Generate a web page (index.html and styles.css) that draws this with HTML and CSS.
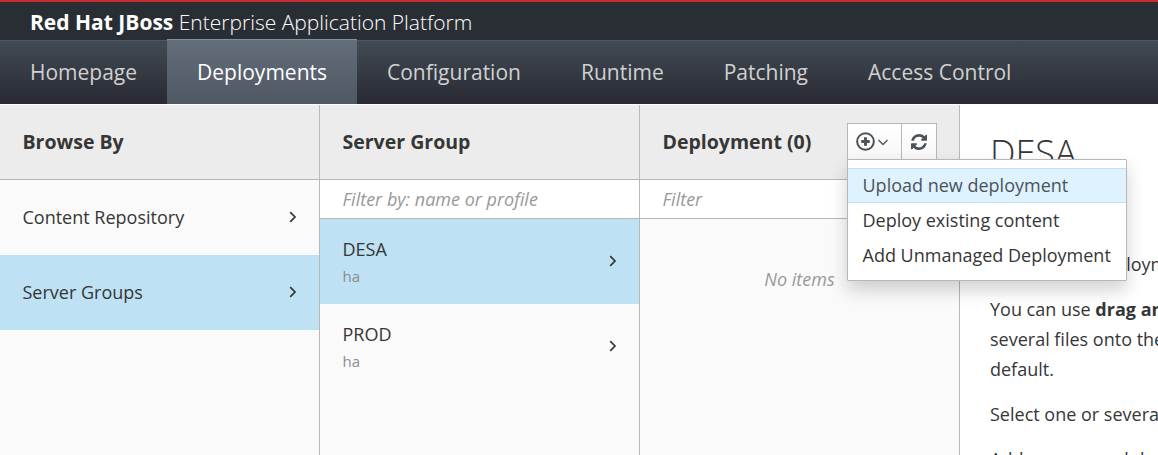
FILE: index.html
```html
<!DOCTYPE html>
<html lang="en">
<head>
<meta charset="utf-8">
<title>Red Hat JBoss Enterprise Application Platform</title>
<link rel="stylesheet" href="styles.css">
</head>
<body>
<header class="brand"><strong>Red Hat JBoss</strong>&nbsp;<span>Enterprise Application Platform</span></header>
<nav class="nav">
  <a class="nav-item">Homepage</a>
  <a class="nav-item active">Deployments</a>
  <a class="nav-item">Configuration</a>
  <a class="nav-item">Runtime</a>
  <a class="nav-item">Patching</a>
  <a class="nav-item">Access Control</a>
</nav>
<main class="finder">
  <section class="column">
    <div class="column-head"><h2>Browse By</h2></div>
    <div class="row"><span>Content Repository</span><svg class="chev" viewBox="0 0 8 12"><path d="M1.2 1.2 6 6 1.2 10.8"/></svg></div>
    <div class="row selected"><span>Server Groups</span><svg class="chev" viewBox="0 0 8 12"><path d="M1.2 1.2 6 6 1.2 10.8"/></svg></div>
  </section>
  <section class="column">
    <div class="column-head"><h2>Server Group</h2></div>
    <div class="filter">Filter by: name or profile</div>
    <div class="row tall selected"><div>DESA<small>ha</small></div><svg class="chev" viewBox="0 0 8 12"><path d="M1.2 1.2 6 6 1.2 10.8"/></svg></div>
    <div class="row tall"><div>PROD<small>ha</small></div><svg class="chev" viewBox="0 0 8 12"><path d="M1.2 1.2 6 6 1.2 10.8"/></svg></div>
  </section>
  <section class="column">
    <div class="column-head">
      <h2>Deployment (0)</h2>
      <div class="actions">
        <div class="btn add">
          <svg class="plus" viewBox="0 0 18 18"><circle cx="9" cy="9" r="7.9" fill="none" stroke="#4d5258" stroke-width="1.9"/><path d="M9 5v8M5 9h8" fill="none" stroke="#4d5258" stroke-width="2.8"/></svg>
          <svg class="down" viewBox="0 0 10 7"><path d="M.5 1 5 5.500 9.500 1" fill="none" stroke="#4d5258" stroke-width="1.3"/></svg>
        </div>
        <div class="btn refresh"><svg viewBox="0 0 1536 1536"><path fill="#4d5258" d="M1511 928q0 5-1 7-64 268-268 434.500T764 1536q-146 0-282.500-55T238 1324l-129 129q-19 19-45 19t-45-19-19-45V960q0-26 19-45t45-19h448q26 0 45 19t19 45-19 45l-137 137q71 66 161 102t187 36q134 0 250-65t186-179q11-17 53-117 8-23 30-23h192q13 0 22.500 9.500t9.500 22.500zm25-800v448q0 26-19 45t-45 19h-448q-26 0-45-19t-19-45 19-45l138-138Q969 256 768 256q-134 0-250 65T332 500q-11 17-53 117-8 23-30 23H50q-13 0-22.500-9.500T18 608v-7q65-268 270-434.500T768 0q146 0 284 55.500T1297 212l130-129q19-19 45-19t45 19 19 45z"/></svg></div>
        <div class="menu">
          <a class="menu-item hover">Upload new deployment</a>
          <a class="menu-item">Deploy existing content</a>
          <a class="menu-item">Add Unmanaged Deployment</a>
        </div>
      </div>
    </div>
    <div class="filter">Filter</div>
    <div class="empty">No items</div>
  </section>
  <article class="preview">
    <h1>DESA</h1>
    <p>Manage the deployments</p>
    <p>You can use <b>drag and</b><br>several files onto the<br>default.</p>
    <p>Select one or several</p>
    <p>Add unmanaged deployments</p>
  </article>
</main>
</body>
</html>
```
FILE: styles.css
```css
* { box-sizing: border-box; }
body {
  margin: 0;
  height: 455px;
  overflow: hidden;
  display: flex;
  flex-direction: column;
  font: 18px/30px "Open Sans", "Liberation Sans", sans-serif;
  color: #363636;
  background: #fff;
}
.brand {
  display: flex;
  flex: none;
  height: 40px;
  padding-left: 30px;
  border-top: 2px solid #cc2a2e;
  background: #292e34;
  color: #fff;
  font-size: 21px;
  line-height: 40px;
}
.brand span { font-weight: 300; }
.nav {
  display: flex;
  flex: none;
  height: 64px;
  border-top: 1px solid #4c5861;
  background: linear-gradient(#414a53, #292a33);
}
.nav-item {
  height: 63px;
  padding: 0 30px;
  font-size: 21px;
  line-height: 62px;
  color: #d1d1d1;
  white-space: nowrap;
}
.nav-item.active {
  height: 65px;
  margin-top: -2px;
  border-top: 1px solid #868f9e;
  line-height: 64px;
  color: #fff;
  background: linear-gradient(#636e7b, #4f5763);
}
.finder {
  display: flex;
  flex: 1;
  min-height: 0;
  padding-top: 1px;
}
.column {
  flex: none;
  width: 320px;
  border-right: 1px solid #b8b8ba;
  background: #fafafa;
}
.column-head {
  display: flex;
  justify-content: space-between;
  align-items: center;
  height: 75px;
  padding: 0 22px 0 22.5px;
  border-bottom: 1px solid #b8b8ba;
  background: #ececec;
}
.column-head h2 { margin: 0; font-size: 19.5px; font-weight: 700; white-space: nowrap; }
.row {
  display: flex;
  justify-content: space-between;
  align-items: center;
  height: 75px;
  padding: 0 22px 2px 22.5px;
}
.row.tall { height: 85px; line-height: 27px; }
.row.tall > div { padding-top: 4px; }
.row.selected { background: #bee1f4; }
.row small { display: block; font-size: 15px; color: #8b8d8f; }
.chev {
  width: 8px;
  height: 12px;
  fill: none;
  stroke: #363636;
  stroke-width: 1.7;
}
.filter {
  height: 39px;
  padding-left: 22.5px;
  border-bottom: 1px solid #b8b8ba;
  background: #fff;
  color: #999;
  font-style: italic;
  line-height: 39px;
}
.empty { padding-top: 45px; text-align: center; font-style: italic; color: #999; }
.actions { position: relative; display: flex; height: 37px; margin-bottom: 2px; }
.btn {
  display: flex;
  align-items: center;
  border: 1px solid #b7b7b7;
  background: linear-gradient(#fff, #f7f7f7);
}
.add { width: 55px; padding-left: 8px; gap: 3px; }
.refresh { width: 36px; margin-left: -1px; justify-content: center; }
.plus { width: 19px; height: 19px; }
.down { width: 10px; height: 7px; margin-top: 3px; }
.refresh svg { width: 16px; height: 16px; margin-top: 1px; }
.menu {
  position: absolute;
  z-index: 2;
  top: 36px;
  left: 0;
  width: 280px;
  height: 122px;
  padding-top: 8px;
  border: 1px solid #b7b7b7;
  border-radius: 1px;
  background: #fff;
  box-shadow: 0 9px 18px rgba(0, 0, 0, .18);
}
.menu-item {
  display: block;
  height: 35px;
  padding-left: 14.5px;
  border: solid transparent;
  border-width: 1px 0;
  line-height: 33px;
  white-space: nowrap;
}
.menu-item.hover { color: #4d5258; background: #def3ff; border-color: #bee1f4; }
.preview {
  flex: 1;
  min-width: 0;
  overflow: hidden;
  padding: 28px 0 0 30px;
  white-space: nowrap;
}
.preview h1 { margin: 0 0 76px; font-size: 36px; font-weight: 300; line-height: 40px; }
.preview p { margin: 0 0 15px; }
```
